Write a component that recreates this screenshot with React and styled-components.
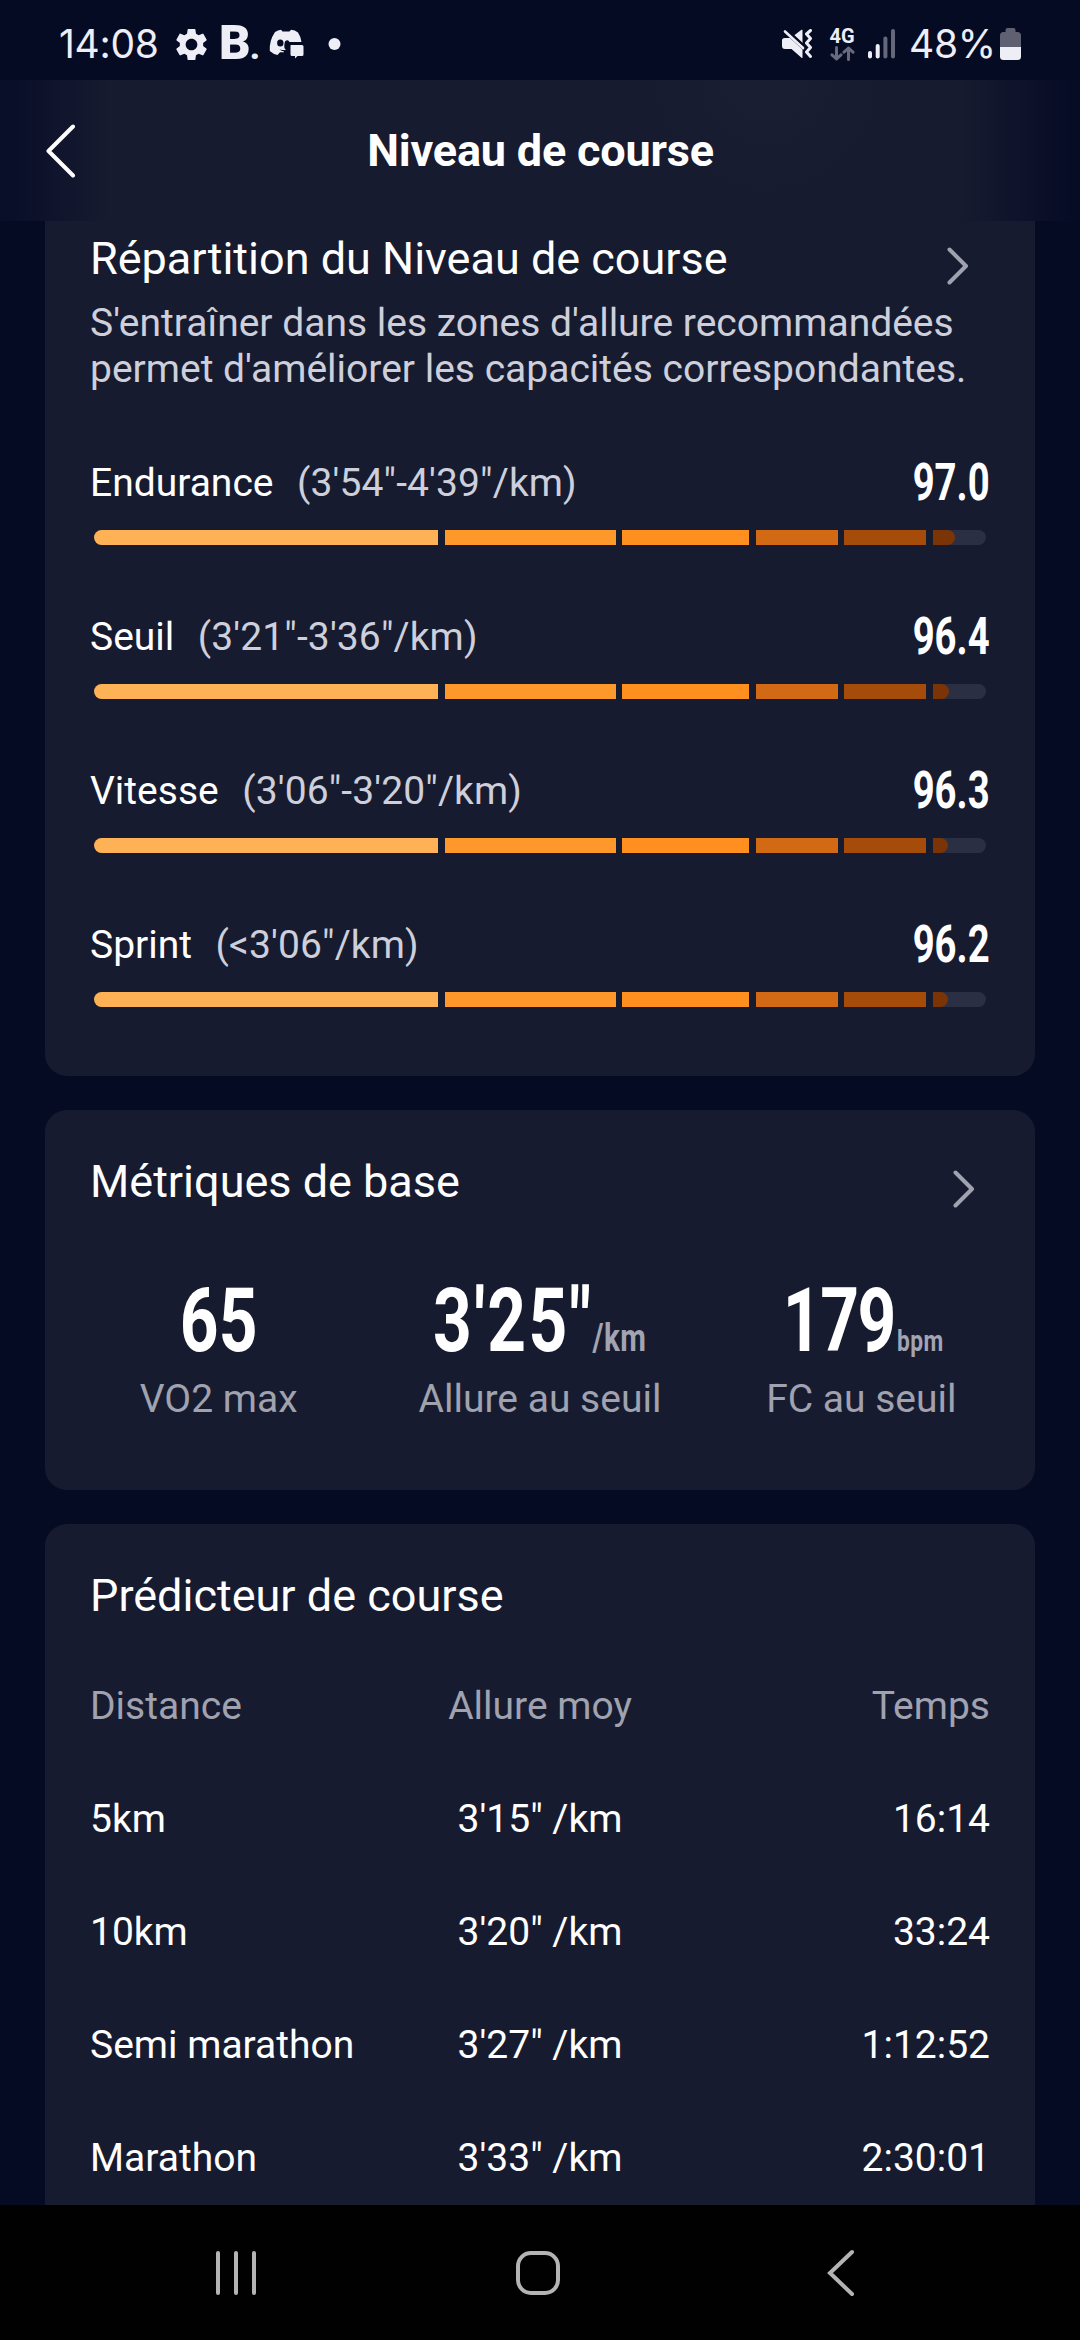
import React from 'react';
import styled, { createGlobalStyle } from 'styled-components';
import { MdSettings } from 'react-icons/md';

const GlobalStyle = createGlobalStyle`
  * { box-sizing: border-box; }
  body {
    margin: 0;
    background: #060b24;
    font-family: Roboto, sans-serif;
    color: #fff;
  }
`;

const Screen = styled.div`
  width: 1080px;
  height: 2340px;
  overflow: hidden;
  display: flex;
  flex-direction: column;
  background: #060b24;
`;

const StatusBar = styled.div`
  height: 80px;
  flex: none;
  padding: 8px 59px 0;
  display: flex;
  justify-content: space-between;
  align-items: center;
  color: #eeeef6;
`;

const StatusGroup = styled.div`
  display: flex;
  align-items: center;
  svg { display: block; flex: none; }
`;

const StatusText = styled.span`
  font-family: Inter, sans-serif;
  font-size: 39px;
  font-weight: 400;
  line-height: 48px;
  letter-spacing: -.3px;
  width: ${p => p.$width}px;
  margin-left: ${p => p.$gap || 0}px;
  white-space: nowrap;
`;

const Brand = styled.span`
  font-size: 49px;
  font-weight: 900;
  line-height: 48px;
  width: 50px;
  margin-left: 8px;
  padding-top: 2px;
  white-space: nowrap;
  small { font-size: 34px; margin-left: -1px; }
`;

const Network = styled.div`
  width: 26px;
  margin: 0 13px 0 16px;
  display: flex;
  flex-direction: column;
  align-items: center;
  font-size: 20px;
  font-weight: 700;
  line-height: 16px;
  svg { margin-top: 2px; }
`;

const Header = styled.header`
  height: 141px;
  flex: none;
  padding: 0 45px;
  display: grid;
  grid-template-columns: 60px 1fr 60px;
  align-items: center;
  background:
    radial-gradient(circle at 765px 0, rgba(40, 44, 66, .2), transparent 120px),
    linear-gradient(90deg, #080d28 0, #171b30 110px, #171b30 960px, #070c26 1070px);
`;

const HeaderTitle = styled.h1`
  margin: 0;
  padding-left: 1px;
  text-align: center;
  font-size: 45px;
  font-weight: 700;
  line-height: 54px;
  letter-spacing: -.2px;
`;

const Content = styled.main`
  flex: 1;
  min-height: 0;
  overflow: hidden;
  padding: 0 45px;
  display: flex;
  flex-direction: column;
  gap: 34px;
`;

const Card = styled.section`
  flex: none;
  background: #171b30;
  border-radius: ${p => p.$cut ? '0 0 22px 22px' : '22px'};
  padding: ${p => p.$pad};
`;

const CardHead = styled.div`
  display: flex;
  justify-content: space-between;
  padding-right: ${p => p.$inset || 0}px;
  height: 52px;
`;

const CardTitle = styled.h2`
  margin: 0;
  font-size: 45px;
  font-weight: 400;
  line-height: 52px;
`;

const Description = styled.p`
  margin: 15px 0 68px;
  font-size: 39px;
  line-height: 46px;
  color: #cdcfdb;
  white-space: nowrap;
`;

const LevelList = styled.div`
  display: flex;
  flex-direction: column;
  gap: 69px;
`;

const LevelHead = styled.div`
  display: flex;
  height: 46px;
  font-size: 39px;
  line-height: 46px;
`;

const Range = styled.span`
  margin-left: 23.5px;
  color: #cdcfdb;
  font-kerning: none;
  letter-spacing: .12px;
`;

const Score = styled.span`
  margin-left: auto;
  font-size: 51px;
  font-weight: 700;
  line-height: 46px;
  transform: scaleX(.75);
  transform-origin: right;
`;

const Bar = styled.div`
  margin: 24px 4px 0;
  height: 15px;
  display: flex;
  gap: 6.6px;
  border-radius: 8px;
  overflow: hidden;
`;

const Segment = styled.div`
  flex: ${p => p.$size} 0 0;
  background: ${p => p.$color};
`;

const Fill = styled.div`
  height: 100%;
  background: #7b3406;
  border-radius: 0 8px 8px 0;
`;

const Metrics = styled.div`
  margin: 68px -32px 0;
  display: grid;
  grid-template-columns: repeat(3, 1fr);
  text-align: center;
`;

const MetricValue = styled.div`
  font-size: 89px;
  font-weight: 700;
  font-kerning: none;
  line-height: 90px;
  height: 90px;
  padding-left: ${p => p.$shift || 0}px;
  letter-spacing: ${p => p.$spacing || 0}px;
  white-space: nowrap;
  transform: scaleX(.76);
`;

const Unit = styled.span`
  font-size: ${p => p.$size}px;
  font-weight: 700;
  letter-spacing: .5px;
  margin-left: ${p => p.$gap}px;
  color: #a2a4b1;
`;

const MetricLabel = styled.div`
  margin-top: 10px;
  font-size: 39px;
  line-height: 46px;
  color: #a0a2af;
`;

const Table = styled.div`
  margin-top: 28px;
`;

const TableRow = styled.div`
  display: grid;
  grid-template-columns: 1fr 1fr 1fr;
  font-size: 39px;
  line-height: 113px;
  color: ${p => p.$head ? '#a0a2af' : '#fff'};
  span:nth-child(2) { text-align: center; }
  span:nth-child(3) { text-align: right; }
`;

const NavBar = styled.nav`
  height: 135px;
  flex: none;
  padding: 0 210px;
  display: flex;
  justify-content: space-between;
  align-items: center;
  background: #010101;
`;

const ChevronBox = styled.div`
  padding-top: 14px;
  svg { display: block; }
`;

const segments = [
  { size: 344, color: '#ffb156' },
  { size: 171, color: '#ff982a' },
  { size: 127, color: '#ff9020' },
  { size: 82, color: '#d16915' },
  { size: 82, color: '#a54c0a' },
];

const levels = [
  { name: 'Endurance', range: `(3'54"-4'39"/km)`, score: '97.0', fill: 22 },
  { name: 'Seuil', range: `(3'21"-3'36"/km)`, score: '96.4', fill: 16 },
  { name: 'Vitesse', range: `(3'06"-3'20"/km)`, score: '96.3', fill: 15.5 },
  { name: 'Sprint', range: `(<3'06"/km)`, score: '96.2', fill: 15 },
];

const races = [
  ['5km', `3'15" /km`, '16:14'],
  ['10km', `3'20" /km`, '33:24'],
  ['Semi marathon', `3'27" /km`, '1:12:52'],
  ['Marathon', `3'33" /km`, '2:30:01'],
];

const Chevron = () => (
  <ChevronBox>
    <svg width="22" height="38" viewBox="0 0 22 38" fill="none" stroke="#a0a2af" strokeWidth="4" strokeLinecap="round" strokeLinejoin="round">
      <path d="M2.5 2.5L19 19L2.5 35.5" />
    </svg>
  </ChevronBox>
);

const Level = ({ name, range, score, fill }) => (
  <div>
    <LevelHead>
      <span>{name}</span>
      <Range>{range}</Range>
      <Score>{score}</Score>
    </LevelHead>
    <Bar>
      {segments.map(s => <Segment key={s.color} $size={s.size} $color={s.color} />)}
      <Segment $size={53} $color="#2b2f43">
        <Fill style={{ width: fill }} />
      </Segment>
    </Bar>
  </div>
);

const App = () => (
  <Screen>
    <GlobalStyle />
    <StatusBar>
      <StatusGroup>
        <StatusText $width={113}>14:08</StatusText>
        <MdSettings size={39} />
        <Brand>B<small>.</small></Brand>
        <svg width="35" height="30" viewBox="0 0 35 30" fill="currentColor">
          <path d="M6 3Q9 1 12 .7L13.5 2.6H20.5L22 .7Q26 1 29 3.5Q32 8 32.5 13H20.5Q19 10 16 12.5Q14 19 17 21Q13 21 10.5 20.5Q12.5 22 15 22.5V23.3H11L8.5 26Q4 25 .8 22Q0 12 6 3Z" />
          <ellipse cx="11.3" cy="14" rx="3.2" ry="3.6" fill="#060b24" />
          <path d="M22 16H33Q34.5 16 34.5 17.5V25.5Q34.5 27 33 27H28.5L26 29.5V27H23Q21.5 27 21.5 25.5V16.5Z" />
        </svg>
        <svg width="37" height="12" viewBox="0 0 37 12">
          <circle cx="30.5" cy="6" r="6" fill="currentColor" />
        </svg>
      </StatusGroup>
      <StatusGroup>
        <svg width="31" height="30" viewBox="0 0 31 30" fill="currentColor">
          <path d="M2.5 9H8L20.5 20.5V28.5Q20.5 29.5 19.5 28.8L9.5 20H3Q0 20 0 17V11.5Q0 9 2.5 9Z" />
          <path d="M12 6.5L19.5 .8Q20.5 .3 20.5 1.5V14.5Z" />
          <path d="M4 .5L22 17" stroke="#060b24" strokeWidth="3" />
          <path d="M3 2.5L21 19" stroke="currentColor" strokeWidth="2.6" strokeLinecap="round" />
          <path d="M28.5 1.5L24.5 5L28.5 9.5L24.5 14L28.5 18.5L24.5 23L28.5 27.5" fill="none" stroke="currentColor" strokeWidth="3" strokeLinecap="round" strokeLinejoin="round" />
        </svg>
        <Network>
          4G
          <svg width="25" height="15" viewBox="0 0 25 15" fill="none" stroke="#686b7e" strokeWidth="3" strokeLinecap="round" strokeLinejoin="round">
            <path d="M6.5 1.5V13M2 8.8L6.5 13L11 8.8M18.5 13.5V2M14 6.2L18.5 2L23 6.2" />
          </svg>
        </Network>
        <svg width="28" height="30" viewBox="0 0 28 30">
          <rect x="0" y="22" width="4" height="7.5" rx="2" fill="currentColor" />
          <rect x="7.7" y="15" width="4" height="14.5" rx="2" fill="currentColor" />
          <rect x="15.4" y="7.5" width="4" height="22" rx="2" fill="#65687b" />
          <rect x="23" y="0" width="4" height="29.5" rx="2" fill="#65687b" />
        </svg>
        <StatusText $width={91} $gap={13}>48%</StatusText>
        <svg width="21" height="32" viewBox="0 0 21 32">
          <path d="M5.5 4V2Q5.5 0 7.5 0H13.5Q15.5 0 15.5 2V4H17.5Q21 4 21 7.5V19H0V7.5Q0 4 3.5 4Z" fill="#5f6173" />
          <path d="M0 19H21V28.5Q21 32 17.5 32H3.5Q0 32 0 28.5Z" fill="currentColor" />
        </svg>
      </StatusGroup>
    </StatusBar>
    <Header>
      <svg width="32" height="54" viewBox="0 0 32 54" fill="none" stroke="#fff" strokeWidth="4" strokeLinecap="round" strokeLinejoin="round">
        <path d="M28 2.5L3.5 27L28 51.5" />
      </svg>
      <HeaderTitle>Niveau de course</HeaderTitle>
    </Header>
    <Content>
      <Card $cut $pad="12px 45px 69px">
        <CardHead $inset={21}>
          <CardTitle>Répartition du Niveau de course</CardTitle>
          <Chevron />
        </CardHead>
        <Description>
          S'entraîner dans les zones d'allure recommandées<br />
          permet d'améliorer les capacités correspondantes.
        </Description>
        <LevelList>
          {levels.map(l => <Level key={l.name} {...l} />)}
        </LevelList>
      </Card>
      <Card $pad="46px 45px 68px">
        <CardHead $inset={15}>
          <CardTitle>Métriques de base</CardTitle>
          <Chevron />
        </CardHead>
        <Metrics>
          <div>
            <MetricValue>65</MetricValue>
            <MetricLabel>VO2 max</MetricLabel>
          </div>
          <div>
            <MetricValue $spacing={3}>3'25"<Unit $size={39} $gap={-1}>/km</Unit></MetricValue>
            <MetricLabel>Allure au seuil</MetricLabel>
          </div>
          <div>
            <MetricValue $spacing={-2} $shift={4}>179<Unit $size={30} $gap={3}>bpm</Unit></MetricValue>
            <MetricLabel>FC au seuil</MetricLabel>
          </div>
        </Metrics>
      </Card>
      <Card $pad="46px 45px 68px">
        <CardHead>
          <CardTitle>Prédicteur de course</CardTitle>
        </CardHead>
        <Table>
          <TableRow $head>
            <span>Distance</span>
            <span>Allure moy</span>
            <span>Temps</span>
          </TableRow>
          {races.map(([distance, pace, time]) => (
            <TableRow key={distance}>
              <span>{distance}</span>
              <span>{pace}</span>
              <span>{time}</span>
            </TableRow>
          ))}
        </Table>
      </Card>
    </Content>
    <NavBar>
      <svg width="52" height="48" viewBox="0 0 52 48" stroke="#b4b4b4" strokeWidth="4" strokeLinecap="round">
        <path d="M8 4V44M26 4V44M44 4V44" />
      </svg>
      <svg width="52" height="48" viewBox="0 0 52 48" fill="none" stroke="#b4b4b4" strokeWidth="4">
        <rect x="4" y="4" width="40" height="40" rx="13" />
      </svg>
      <svg width="52" height="48" viewBox="0 0 52 48" fill="none" stroke="#b4b4b4" strokeWidth="4" strokeLinecap="round">
        <path d="M34 3L12 24L34 45" />
      </svg>
    </NavBar>
  </Screen>
);

export default App;
